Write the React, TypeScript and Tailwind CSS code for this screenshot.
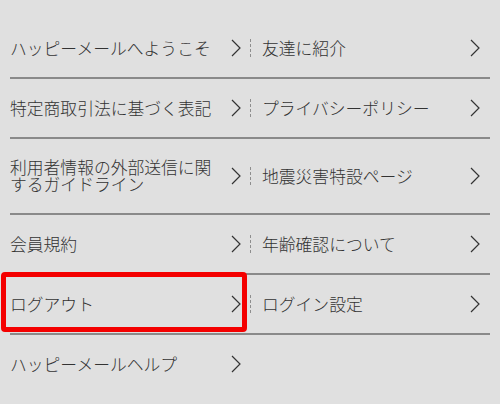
import React from 'react';

const rows: [string, string | null][] = [
  ['ハッピーメールへようこそ', '友達に紹介'],
  ['特定商取引法に基づく表記', 'プライバシーポリシー'],
  ['利用者情報の外部送信に関するガイドライン', '地震災害特設ページ'],
  ['会員規約', '年齢確認について'],
  ['ログアウト', 'ログイン設定'],
  ['ハッピーメールヘルプ', null],
];

function Chevron() {
  return (
    <svg width="10" height="18" viewBox="0 0 10 18" className="shrink-0" fill="none">
      <polyline points="1,1 9,9 1,17" stroke="#333" strokeWidth="1.2" />
    </svg>
  );
}

export default function App() {
  return (
    <div
      className="min-h-[404px] bg-[#e0e0e0] px-[10px] pt-[19px] text-[#333] font-light"
      style={{ fontFamily: '"Noto Sans CJK JP", "Noto Sans", sans-serif' }}
    >
      <ul className="grid grid-cols-2">
        {rows.map(([left, right], i) => {
          const last = i === rows.length - 1;
          const border = last ? '' : 'border-b-2 border-[#8a8a8a]';
          return (
            <React.Fragment key={i}>
              <li className={`relative flex items-center justify-between py-[20px] pr-[9px] ${border}`}>
                <span className="text-[16.8px] leading-[17px] pr-[8px]">{left}</span>
                <Chevron />
                {left === 'ログアウト' && (
                  <span className="absolute -top-[3px] -left-[9px] h-[60px] w-[246px] rounded-[4px] border-[5px] border-[#f40000]" />
                )}
              </li>
              {right ? (
                <li className={`flex items-center py-[20px] pr-[10px] ${border}`}>
                  <span className="h-[18px] border-l border-dashed border-[#8e8e8e]" />
                  <span className="ml-[11px] flex-1 text-[16.8px] leading-[17px]">{right}</span>
                  <Chevron />
                </li>
              ) : (
                <li />
              )}
            </React.Fragment>
          );
        })}
      </ul>
    </div>
  );
}
